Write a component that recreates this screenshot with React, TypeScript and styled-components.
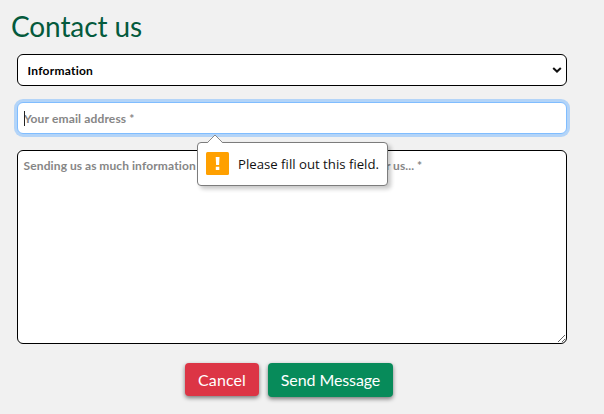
import React from "react";
import styled, { createGlobalStyle, css } from "styled-components";

const GlobalStyle = createGlobalStyle`
  *, *::before, *::after { box-sizing: border-box; }
  body {
    margin: 0;
    background: #f1f1f1;
    font-family: Lato, "Liberation Sans", sans-serif;
    overflow: hidden;
  }
`;

const Page = styled.main`
  height: 414px;
  padding: 8px 37px 0 11px;
`;

const Title = styled.h1`
  margin: 0;
  height: 36px;
  color: #045a3c;
  font-size: 28px;
  font-weight: 400;
  line-height: 36px;
  letter-spacing: -0.1px;
`;

const Form = styled.form`
  display: flex;
  flex-direction: column;
  gap: 16px;
  margin: 10px 0 0 6px;
`;

const fieldStyle = css`
  display: block;
  width: 100%;
  margin: 0;
  border: 1px solid #000;
  border-radius: 6px;
  background: #fff;
  color: #000;
  font-family: inherit;
  font-size: 12px;
  font-weight: 700;
  letter-spacing: 0.14px;
  outline: none;
  &::placeholder { color: #868686; opacity: 1; }
`;

const FieldWrap = styled.div`
  position: relative;
`;

const Select = styled.select`
  ${fieldStyle}
  appearance: none;
  height: 32px;
  padding: 0 9.5px;
  letter-spacing: 0.25px;
`;

const Chevron = styled.svg`
  position: absolute;
  right: 5px;
  top: 12px;
  pointer-events: none;
`;

const EmailInput = styled.input`
  ${fieldStyle}
  height: 32px;
  padding: 0 6px;
  border-color: #80bdff;
  box-shadow: 0 0 0 3px #b3d4f8;
  caret-color: transparent;
`;

const Caret = styled.span`
  position: absolute;
  left: 7px;
  top: 9px;
  width: 1px;
  height: 15px;
  background: #222;
`;

const Message = styled.textarea`
  ${fieldStyle}
  height: 194px;
  padding: 6px 5.5px;
  line-height: 17px;
  word-spacing: -0.35px;
  white-space: pre;
  overflow: hidden;
  resize: both;
`;

const Tooltip = styled.div`
  position: absolute;
  z-index: 2;
  left: 180px;
  top: 40px;
  display: flex;
  align-items: center;
  gap: 9px;
  width: 191px;
  height: 44px;
  padding: 0 0 2px 8px;
  border: 1px solid #7c7c7c;
  border-radius: 4px;
  background: #fff;
  box-shadow: 3px 3px 4px rgba(0, 0, 0, 0.22);
  color: #111;
  font-family: "Open Sans", "Noto Sans", sans-serif;
  font-size: 13.2px;
  line-height: 20px;
  white-space: nowrap;
`;

const TooltipArrow = styled.svg`
  position: absolute;
  left: 8px;
  top: -9px;
`;

const WarningIcon = styled.svg`
  flex: none;
`;

const TooltipText = styled.span`
  position: relative;
  top: 1px;
`;

const Actions = styled.div`
  display: flex;
  align-items: flex-start;
  gap: 9px;
  margin: 3px 0 0 168px;
`;

const Button = styled.button<{ $tone: "danger" | "success" }>`
  width: ${({ $tone }) => ($tone === "danger" ? 74 : 125)}px;
  height: ${({ $tone }) => ($tone === "danger" ? 33 : 34)}px;
  padding: 0;
  border: 0;
  border-radius: 4px;
  background: ${({ $tone }) => ($tone === "danger" ? "#dc3545" : "#078b5a")};
  box-shadow: 0 2px 4px rgba(0, 0, 0, 0.5);
  color: #fff;
  font-family: inherit;
  font-size: 16px;
  letter-spacing: ${({ $tone }) => ($tone === "danger" ? 0.1 : -0.1)}px;
  line-height: 24px;
  white-space: nowrap;
`;

export default function App() {
  return (
    <>
      <GlobalStyle />
      <Page>
        <Title>Contact us</Title>
        <Form noValidate onSubmit={(e) => e.preventDefault()}>
          <FieldWrap>
            <Select aria-label="Subject" defaultValue="Information">
              <option>Information</option>
            </Select>
            <Chevron width="10" height="8" viewBox="0 0 10 8" fill="none">
              <path d="M1.2 2 L5 5.6 L8.8 2" stroke="#111" strokeWidth="2" />
            </Chevron>
          </FieldWrap>
          <FieldWrap>
            <EmailInput type="email" placeholder="Your email address *" />
            <Caret />
            <Tooltip role="alert">
              <TooltipArrow width="18" height="10" viewBox="0 0 18 10">
                <path d="M1 10 V9.5 L9 1.2 L17 9.5 V10 Z" fill="#fff" />
                <path d="M1 9 L9 1 L17 9" fill="none" stroke="#8a8a8a" strokeWidth="1" />
              </TooltipArrow>
              <WarningIcon width="23" height="23" viewBox="0 0 23 23">
                <rect width="23" height="23" rx="1.5" fill="#ffa000" />
                <path d="M9.7 5h3.8l-.4 8h-3zM9.8 14.8h3.5V18H9.8z" fill="#fff" />
              </WarningIcon>
              <TooltipText>Please fill out this field.</TooltipText>
            </Tooltip>
          </FieldWrap>
          <Message placeholder="Sending us as much information as possible would be very useful for us... *" />
          <Actions>
            <Button type="button" $tone="danger">Cancel</Button>
            <Button type="submit" $tone="success">Send Message</Button>
          </Actions>
        </Form>
      </Page>
    </>
  );
}
